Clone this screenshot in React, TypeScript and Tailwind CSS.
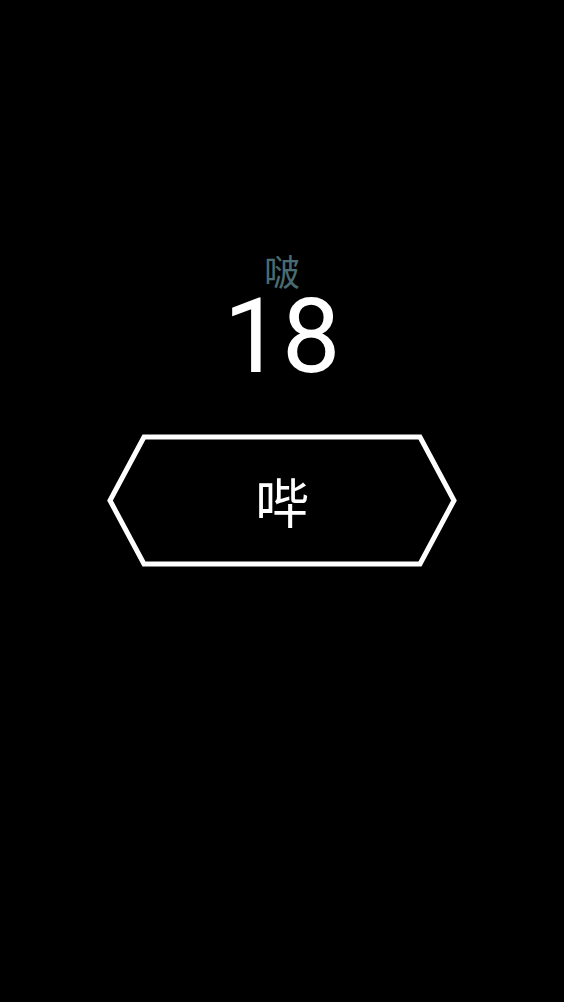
import React from "react";

function HexButton({ label }: { label: string }) {
  return (
    <button className="relative flex h-[133px] w-[352px] items-center justify-center bg-transparent">
      <svg className="absolute inset-0 h-full w-full" viewBox="0 0 352 133" fill="none">
        <polygon
          points="38,3 314,3 348,66.5 314,130 38,130 4,66.5"
          stroke="#ffffff"
          strokeWidth="5"
          strokeLinejoin="miter"
        />
      </svg>
      <span className="relative text-[54px] leading-none text-white [font-family:'Noto_Sans_CJK_SC',sans-serif]">
        {label}
      </span>
    </button>
  );
}

export default function App() {
  return (
    <div className="flex min-h-[1002px] w-full flex-col items-center bg-black pt-[252px]">
      <div className="text-[36px] leading-none text-[#4b6b72] [font-family:'Noto_Sans_CJK_SC',sans-serif]">
        啵
      </div>
      <div className="mt-[5px] text-[104px] leading-[0.85] text-white [font-family:Roboto,sans-serif]">
        18
      </div>
      <div className="mt-[53px]">
        <HexButton label="哔" />
      </div>
    </div>
  );
}
